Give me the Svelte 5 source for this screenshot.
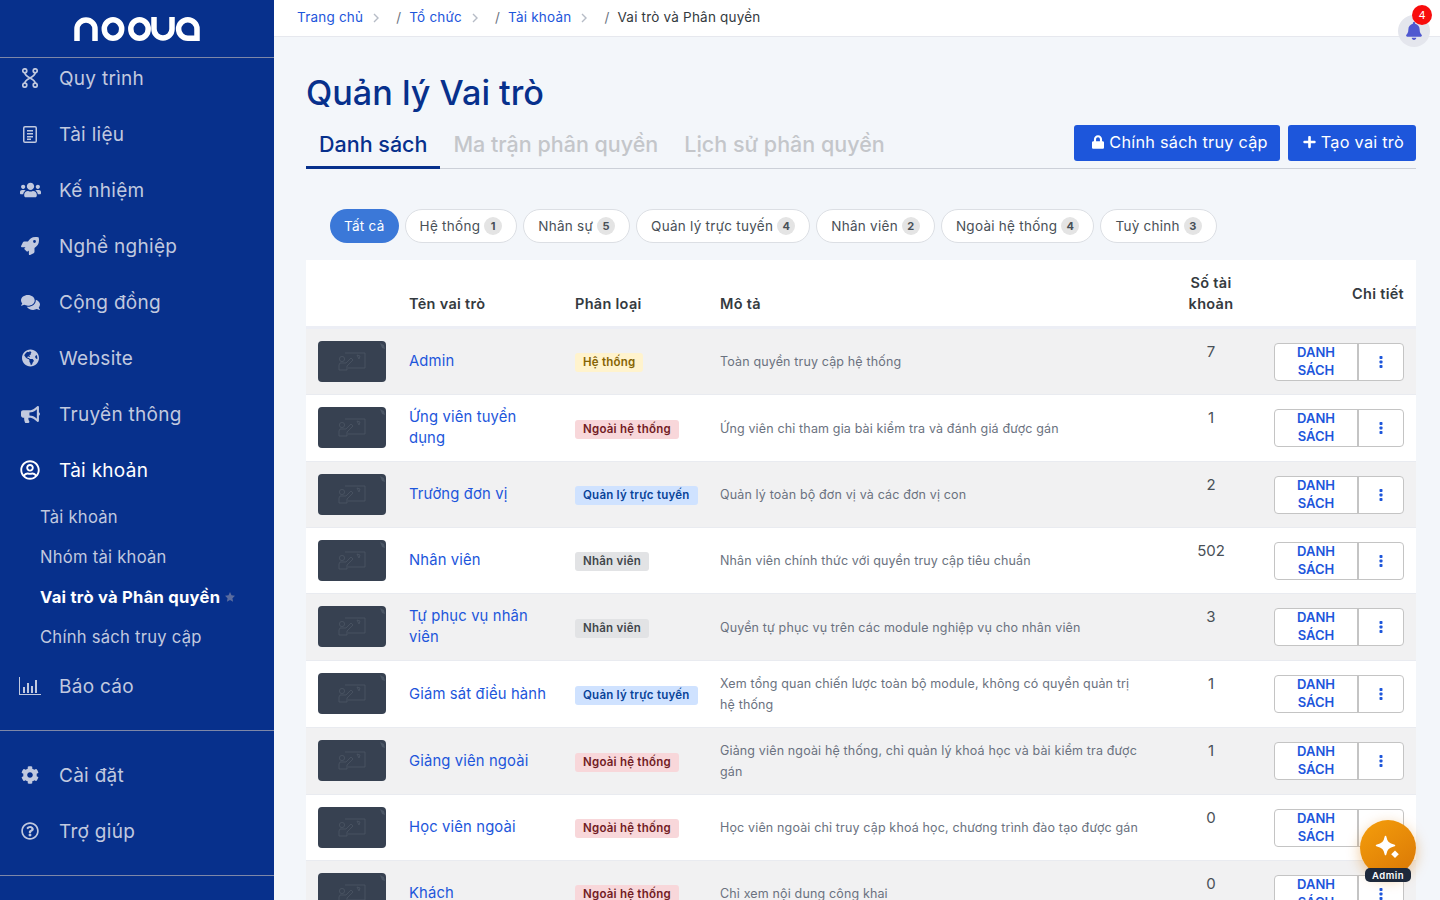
<script>
	const icons = {
		users: ['0 0 640 512', 'M96 224c35.3 0 64-28.7 64-64s-28.7-64-64-64-64 28.7-64 64 28.7 64 64 64zm448 0c35.3 0 64-28.7 64-64s-28.7-64-64-64-64 28.7-64 64 28.7 64 64 64zm32 32h-64c-17.6 0-33.5 7.1-45.1 18.6 40.3 22.1 68.9 62 75.1 109.4h66c17.7 0 32-14.3 32-32v-32c0-35.3-28.7-64-64-64zm-256 0c61.9 0 112-50.1 112-112S381.9 32 320 32 208 82.1 208 144s50.1 112 112 112zm76.8 32h-8.3c-20.8 10-43.9 16-68.5 16s-47.6-6-68.5-16h-8.3C179.6 288 128 339.6 128 403.2V432c0 26.5 21.5 48 48 48h288c26.5 0 48-21.5 48-48v-28.8c0-63.6-51.6-115.2-115.2-115.2zm-223.7-13.4C161.5 263.1 145.6 256 128 256H64c-35.3 0-64 28.7-64 64v32c0 17.7 14.3 32 32 32h65.9c6.3-47.4 34.9-87.3 75.2-109.4z'],
		rocket: ['0 0 512 512', 'M505.12 19.09c-1.19-5.53-6.66-11-12.21-12.19C460.72 0 435.51 0 410.41 0 307.18 0 245.27 55.2 199.05 128H94.84c-16.35.02-35.56 11.88-42.89 26.48L2.52 253.3A28.4 28.4 0 0 0 0 264a24 24 0 0 0 24 24h103.81l-22.47 22.47c-11.37 11.36-13 32.26 0 45.25l50.9 50.91c11.16 11.19 32.16 13.16 45.28 0l22.47-22.47V488a24 24 0 0 0 24 24 28.56 28.56 0 0 0 10.71-2.52l98.73-49.39c14.63-7.3 26.51-26.5 26.51-42.86V312.8c72.6-46.31 128.03-108.41 128.03-211.1.02-25.2.02-50.4-6.93-82.61zM384.04 168a40 40 0 1 1 40.01-40 40.02 40.02 0 0 1-40.01 40z'],
		comments: ['0 0 576 512', 'M416 192c0-88.4-93.1-160-208-160S0 103.6 0 192c0 34.3 14.1 65.9 38 92-13.4 30.2-35.5 54.2-35.8 54.5-2.2 2.3-2.8 5.7-1.5 8.7S4.8 352 8 352c36.6 0 66.9-12.3 88.7-25 32.2 15.7 70.3 25 111.3 25 114.9 0 208-71.6 208-160zm122 220c23.9-26 38-57.7 38-92 0-66.9-53.5-124.2-129.3-148.1.9 6.6 1.3 13.3 1.3 20.1 0 105.9-107.7 192-240 192-10.8 0-21.3-.8-31.7-1.9C207.8 439.6 281.8 480 368 480c41 0 79.1-9.2 111.3-25 21.8 12.7 52.1 25 88.7 25 3.2 0 6.1-1.9 7.3-4.8 1.3-2.9.7-6.3-1.5-8.7-.3-.3-22.4-24.2-35.8-54.5z'],
		globe: ['0 0 496 512', 'M248 8C111.03 8 0 119.03 0 256s111.03 248 248 248 248-111.03 248-248S384.97 8 248 8zm82.29 357.6c-3.9 3.88-7.99 7.95-11.31 11.28-2.99 3-5.1 6.7-6.17 10.71-1.51 5.66-2.73 11.38-4.77 16.87l-17.39 46.85c-13.76 3-28 4.69-42.65 4.69v-27.38c1.69-12.62-7.64-36.26-22.63-51.25-6-6-9.37-14.14-9.37-22.63v-32.01c0-11.64-6.27-22.34-16.46-27.97-14.37-7.95-34.81-19.06-48.81-26.11-11.48-5.78-22.1-13.14-31.65-21.75l-.8-.72a114.792 114.792 0 0 1-18.06-20.74c-9.38-13.77-24.66-36.42-34.59-51.14 20.47-45.5 57.36-82.04 103.2-101.89l24.01 12.01C203.48 89.74 216 82.01 216 70.11v-11.3c7.99-1.29 16.12-2.11 24.39-2.42l28.3 28.3c6.25 6.25 6.25 16.38 0 22.63L264 112l-10.34 10.34c-3.12 3.12-3.12 8.19 0 11.31l4.69 4.69c3.12 3.12 3.12 8.19 0 11.31l-8 8a8.008 8.008 0 0 1-5.66 2.34h-8.99c-2.08 0-4.08.81-5.58 2.27l-9.92 9.65a8.008 8.008 0 0 0-1.58 9.31l15.59 31.19c2.66 5.32-1.21 11.58-7.15 11.58h-5.64c-1.93 0-3.79-.7-5.24-1.96l-9.28-8.06a16.017 16.017 0 0 0-15.55-3.1l-31.17 10.39a11.95 11.95 0 0 0-8.17 11.34c0 4.53 2.56 8.66 6.61 10.69l11.08 5.54c9.41 4.71 19.79 7.16 30.31 7.16s22.59 27.29 32 32h66.75c8.49 0 16.62 3.37 22.63 9.37l13.69 13.69a30.503 30.503 0 0 1 8.93 21.57 46.536 46.536 0 0 1-13.72 32.98zM417 274.25c-5.79-1.45-10.84-5-14.15-9.97l-17.98-26.97a23.97 23.97 0 0 1 0-26.62l19.59-29.38c2.32-3.47 5.5-6.29 9.24-8.15l12.98-6.49C440.2 193.59 448 223.87 448 256c0 8.67-.74 17.16-1.82 25.54L417 274.25z'],
		bullhorn: ['0 0 576 512', 'M576 240c0-23.63-12.95-44.04-32-55.12V32.01C544 23.26 537.02 0 512 0c-7.12 0-14.19 2.38-19.98 7.02l-85.03 68.03C364.28 109.19 310.66 128 256 128H64c-35.35 0-64 28.65-64 64v96c0 35.35 28.65 64 64 64h33.7c-1.39 10.48-2.18 21.14-2.18 32 0 39.77 9.26 77.35 25.56 110.94 5.19 10.69 16.52 17.06 28.4 17.06h74.28c26.05 0 41.69-29.84 25.9-50.56-16.4-21.52-26.15-48.36-26.15-77.44 0-11.11 1.62-21.79 4.41-32H256c54.66 0 108.28 18.81 150.98 52.95l85.03 68.03a32.023 32.023 0 0 0 19.98 7.02c24.92 0 32-22.78 32-32V295.13C563.05 284.04 576 263.63 576 240zm-96 141.42l-33.05-26.44C392.95 311.78 325.12 288 256 288v-96c69.12 0 136.95-23.78 190.95-66.98L480 98.58v282.84z'],
		user: ['0 0 496 512', 'M248 104c-53 0-96 43-96 96s43 96 96 96 96-43 96-96-43-96-96-96zm0 144c-26.5 0-48-21.5-48-48s21.5-48 48-48 48 21.5 48 48-21.5 48-48 48zm0-240C111 8 0 119 0 256s111 248 248 248 248-111 248-248S385 8 248 8zm0 448c-49.7 0-95.1-18.3-130.1-48.4 14.9-23 40.4-38.6 69.6-39.5 20.8 6.4 40.6 9.6 60.5 9.6s39.7-3.1 60.5-9.6c29.2 1 54.7 16.5 69.6 39.5-35 30.1-80.4 48.4-130.1 48.4zm162.7-84.1c-24.4-31.4-62.1-51.9-105.1-51.9-10.2 0-26 9.6-57.6 9.6-31.5 0-47.4-9.6-57.6-9.6-42.9 0-80.6 20.5-105.1 51.9C61.9 339.2 48 299.2 48 256c0-110.3 89.7-200 200-200s200 89.7 200 200c0 43.2-13.9 83.2-37.3 115.9z'],
		cog: ['0 0 512 512', 'M487.4 315.7l-42.6-24.6c4.3-23.2 4.3-47 0-70.2l42.6-24.6c4.9-2.8 7.1-8.6 5.5-14-11.1-35.6-30-67.8-54.7-94.6-3.8-4.1-10-5.1-14.8-2.3L380.8 110c-17.9-15.4-38.5-27.3-60.8-35.1V25.8c0-5.6-3.9-10.5-9.4-11.7-36.7-8.2-74.3-7.8-109.2 0-5.5 1.2-9.4 6.1-9.4 11.7V75c-22.2 7.9-42.8 19.8-60.8 35.1L88.7 85.5c-4.9-2.8-11-1.9-14.8 2.3-24.7 26.7-43.6 58.9-54.7 94.6-1.7 5.4.6 11.2 5.5 14L67.3 221c-4.3 23.2-4.3 47 0 70.2l-42.6 24.6c-4.9 2.8-7.1 8.6-5.5 14 11.1 35.6 30 67.8 54.7 94.6 3.8 4.1 10 5.1 14.8 2.3l42.6-24.6c17.9 15.4 38.5 27.3 60.8 35.1v49.2c0 5.6 3.9 10.5 9.4 11.7 36.7 8.2 74.3 7.8 109.2 0 5.5-1.2 9.4-6.1 9.4-11.7v-49.2c22.2-7.9 42.8-19.8 60.8-35.1l42.6 24.6c4.9 2.8 11 1.9 14.8-2.3 24.7-26.7 43.6-58.9 54.7-94.6 1.5-5.5-.7-11.3-5.6-14.1zM256 336c-44.1 0-80-35.9-80-80s35.9-80 80-80 80 35.9 80 80-35.9 80-80 80z'],
		help: ['0 0 512 512', 'M256 8C119.043 8 8 119.083 8 256c0 136.997 111.043 248 248 248s248-111.003 248-248C504 119.083 392.957 8 256 8zm0 448c-110.532 0-200-89.431-200-200 0-110.495 89.472-200 200-200 110.491 0 200 89.471 200 200 0 110.53-89.431 200-200 200zm107.244-255.2c0 67.052-72.421 68.084-72.421 92.863V300c0 6.627-5.373 12-12 12h-45.647c-6.627 0-12-5.373-12-12v-8.659c0-35.745 27.1-50.034 47.579-61.516 17.561-9.845 28.324-16.541 28.324-29.579 0-17.246-21.999-28.693-39.784-28.693-23.189 0-33.894 10.977-48.942 29.969-4.057 5.12-11.46 6.071-16.666 2.124l-27.824-21.098c-5.107-3.872-6.251-11.066-2.644-16.363C184.846 131.491 214.94 112 261.794 112c49.071 0 101.45 38.304 101.45 88.8zM298 368c0 23.159-18.841 42-42 42s-42-18.841-42-42 18.841-42 42-42 42 18.841 42 42z'],
		doc: ['0 0 14 17', 'M2 0h10a2 2 0 0 1 2 2v13a2 2 0 0 1-2 2H2a2 2 0 0 1-2-2V2a2 2 0 0 1 2-2zm0 1.500a.5.5 0 0 0-.5.5v13a.5.5 0 0 0 .5.5h10a.5.5 0 0 0 .5-.5V2a.5.5 0 0 0-.5-.5H2zM4 4h6v1.500H4V4zm0 3h6v1.500H4V7zm0 3h6v1.500H4V10zm0 2.600h4V14H4v-1.400z'],
		bars: ['0 0 22 18', 'M0 0h1v17h21v1H0V0zm4 10h2v6H4v-6zm4-4h2v10H8V6zm4 3h2v7h-2V9zm4-6h2v13h-2V3z']
	};

	const navTop = [
		{ label: 'Quy trình', icon: 'flow', w: 16, h: 20 },
		{ label: 'Tài liệu', icon: 'doc', w: 14, h: 17 },
		{ label: 'Kế nhiệm', icon: 'users', w: 21, h: 18 },
		{ label: 'Nghề nghiệp', icon: 'rocket', w: 18, h: 18 },
		{ label: 'Cộng đồng', icon: 'comments', w: 19, h: 17 },
		{ label: 'Website', icon: 'globe', w: 17, h: 18 },
		{ label: 'Truyền thông', icon: 'bullhorn', w: 19, h: 17 }
	];

	const subNav = [
		{ label: 'Tài khoản' },
		{ label: 'Nhóm tài khoản' },
		{ label: 'Vai trò và Phân quyền', active: true },
		{ label: 'Chính sách truy cập' }
	];

	const filters = [
		{ label: 'Tất cả', active: true },
		{ label: 'Hệ thống', count: 1 },
		{ label: 'Nhân sự', count: 5 },
		{ label: 'Quản lý trực tuyến', count: 4 },
		{ label: 'Nhân viên', count: 2 },
		{ label: 'Ngoài hệ thống', count: 4 },
		{ label: 'Tuỳ chỉnh', count: 3 }
	];

	const badgeClass = {
		'Hệ thống': 'sys',
		'Ngoài hệ thống': 'ext',
		'Quản lý trực tuyến': 'mgr',
		'Nhân viên': 'emp'
	};

	const roles = [
		{ name: 'Admin', type: 'Hệ thống', desc: 'Toàn quyền truy cập hệ thống', n: 7 },
		{ name: 'Ứng viên tuyển dụng', type: 'Ngoài hệ thống', desc: 'Ứng viên chỉ tham gia bài kiểm tra và đánh giá được gán', n: 1 },
		{ name: 'Trưởng đơn vị', type: 'Quản lý trực tuyến', desc: 'Quản lý toàn bộ đơn vị và các đơn vị con', n: 2 },
		{ name: 'Nhân viên', type: 'Nhân viên', desc: 'Nhân viên chính thức với quyền truy cập tiêu chuẩn', n: 502 },
		{ name: 'Tự phục vụ nhân viên', type: 'Nhân viên', desc: 'Quyền tự phục vụ trên các module nghiệp vụ cho nhân viên', n: 3 },
		{ name: 'Giám sát điều hành', type: 'Quản lý trực tuyến', desc: 'Xem tổng quan chiến lược toàn bộ module, không có quyền quản trị hệ thống', n: 1 },
		{ name: 'Giảng viên ngoài', type: 'Ngoài hệ thống', desc: 'Giảng viên ngoài hệ thống, chỉ quản lý khoá học và bài kiểm tra được gán', n: 1 },
		{ name: 'Học viên ngoài', type: 'Ngoài hệ thống', desc: 'Học viên ngoài chỉ truy cập khoá học, chương trình đào tạo được gán', n: 0 },
		{ name: 'Khách', type: 'Ngoài hệ thống', desc: 'Chỉ xem nội dung công khai', n: 0 }
	];

	const crumbs = ['Trang chủ', 'Tổ chức', 'Tài khoản'];
</script>

{#snippet icon(name, w, h)}
	{#if name === 'flow'}
		<svg class="ico" width={w} height={h} viewBox="0 0 16 20" fill="none" stroke="currentColor" stroke-width="1.700">
			<circle cx="2.800" cy="2.800" r="2" />
			<circle cx="13.200" cy="2.800" r="2" />
			<circle cx="2.800" cy="17.200" r="2" />
			<circle cx="13.200" cy="17.200" r="2" />
			<path d="M2.800 4.800c0 5 10.400 5.400 10.400 10.400M13.200 4.800c0 5-10.400 5.400-10.400 10.400" />
		</svg>
	{:else}
		<svg class="ico" width={w} height={h} viewBox={icons[name][0]} fill="currentColor"><path d={icons[name][1]} /></svg>
	{/if}
{/snippet}

{#snippet navItem(label, name, w, h, active)}
	<a class="nav-item" class:active href="#top">
		<span class="nav-icon">{@render icon(name, w, h)}</span>
		<span>{label}</span>
	</a>
{/snippet}

<div class="shell">
	<aside class="sidebar">
		<div class="logo">
			<svg width="126" height="24" viewBox="0 0 126 24" fill="none" stroke="#fff" stroke-width="5.500">
				<path d="M3 24V12a9 9 0 0 1 18 0v12" />
				<ellipse cx="39" cy="12" rx="8.700" ry="9.200" />
				<ellipse cx="65.500" cy="12" rx="8.700" ry="9.200" />
				<path d="M80 0v12a9 9 0 0 0 18 0V0" />
				<path d="M123 24V12a9.200 9.200 0 1 0-9.200 9.200H123" />
			</svg>
		</div>

		<nav class="nav">
			{#each navTop as item}
				{@render navItem(item.label, item.icon, item.w, item.h, false)}
			{/each}
			{@render navItem('Tài khoản', 'user', 20, 20, true)}
			<div class="sub-nav">
				{#each subNav as sub}
					<a class="sub-item" class:active={sub.active} href="#top">
						{sub.label}
						{#if sub.active}
							<svg class="star" width="10" height="10" viewBox="0 0 20 20" fill="currentColor"><path d="M10 0l3 6.500 7 .9-5.100 4.900 1.300 7.100-6.200-3.500-6.200 3.500 1.300-7.100L0 7.400l7-.9z" /></svg>
						{/if}
					</a>
				{/each}
			</div>
			<a class="nav-item" href="#top">
				<span class="nav-icon">{@render icon('bars', 22, 18)}</span>
				<span>Báo cáo</span>
			</a>
		</nav>

		<nav class="nav nav-bottom">
			{@render navItem('Cài đặt', 'cog', 18, 18, false)}
			{@render navItem('Trợ giúp', 'help', 18, 18, false)}
		</nav>
	</aside>

	<main class="main">
		<header class="topbar">
			{#each crumbs as crumb}
				<a class="crumb" href="#top">{crumb}</a>
				<svg class="chev" width="6" height="10" viewBox="0 0 6 10" fill="none" stroke="#b6bcc6" stroke-width="1.400"><path d="M1 1l4 4-4 4" /></svg>
				<span class="slash">/</span>
			{/each}
			<span class="crumb-current">Vai trò và Phân quyền</span>
		</header>

		<div class="content">
			<h1>Quản lý Vai trò</h1>

			<div class="tabs-row">
				<div class="tabs">
					<span class="tab active">Danh sách</span>
					<span class="tab">Ma trận phân quyền</span>
					<span class="tab">Lịch sử phân quyền</span>
				</div>
				<div class="actions">
					<button class="btn">
						<svg width="12" height="14" viewBox="0 0 448 512" fill="currentColor"><path d="M400 224h-24v-72C376 68.200 307.800 0 224 0S72 68.200 72 152v72H48c-26.500 0-48 21.500-48 48v192c0 26.500 21.500 48 48 48h352c26.500 0 48-21.500 48-48V272c0-26.500-21.500-48-48-48zm-104 0H152v-72c0-39.700 32.300-72 72-72s72 32.300 72 72v72z" /></svg>
						Chính sách truy cập
					</button>
					<button class="btn btn-create">
						<svg width="13" height="14" viewBox="0 0 448 512" fill="currentColor"><path d="M416 208H272V64c0-17.670-14.330-32-32-32h-32c-17.670 0-32 14.330-32 32v144H32c-17.670 0-32 14.330-32 32v32c0 17.670 14.330 32 32 32h144v144c0 17.670 14.330 32 32 32h32c17.670 0 32-14.330 32-32V304h144c17.670 0 32-14.330 32-32v-32c0-17.670-14.330-32-32-32z" /></svg>
						Tạo vai trò
					</button>
				</div>
			</div>

			<div class="filters">
				{#each filters as f}
					<span class="pill" class:active={f.active}>
						{f.label}
						{#if f.count}<span class="count">{f.count}</span>{/if}
					</span>
				{/each}
			</div>

			<table>
				<colgroup>
					<col style="width: 91px" />
					<col style="width: 166px" />
					<col style="width: 145px" />
					<col style="width: 452px" />
					<col style="width: 102px" />
					<col />
				</colgroup>
				<thead>
					<tr>
						<th></th>
						<th>Tên vai trò</th>
						<th>Phân loại</th>
						<th>Mô tả</th>
						<th class="center">Số tài khoản</th>
						<th class="right">Chi tiết</th>
					</tr>
				</thead>
				<tbody>
					{#each roles as role}
						<tr>
							<td class="thumb-cell">
								<div class="thumb">
									<svg width="28" height="19" viewBox="0 0 28 19" fill="none" stroke="#4b5665" stroke-width="0.800">
										<path d="M7 1h20v15H10" />
										<circle cx="4" cy="7" r="2.600" />
										<path d="M1 18v-5l1-2h6l5-5 2 2-6 6v4z" />
										<path d="M19 3l2 4 1-3z" />
									</svg>
									<svg class="thumb-corner" width="5" height="6" viewBox="0 0 5 6" fill="#4b5665"><path d="M0 0l4 2 1 4-3-1z" /></svg>
								</div>
							</td>
							<td class="name"><a href="#top">{role.name}</a></td>
							<td><span class="badge {badgeClass[role.type]}">{role.type}</span></td>
							<td class="desc">{role.desc}</td>
							<td class="num">{role.n}</td>
							<td>
								<div class="split">
									<a class="split-main" href="#top">Danh sách</a>
									<span class="split-more">
										<svg width="4" height="12" viewBox="0 0 4 12" fill="#1d56db"><rect x="0.500" y="0" width="3" height="3" rx="0.800" /><rect x="0.500" y="4.500" width="3" height="3" rx="0.800" /><rect x="0.500" y="9" width="3" height="3" rx="0.800" /></svg>
									</span>
								</div>
							</td>
						</tr>
					{/each}
				</tbody>
			</table>
		</div>
	</main>

	<div class="notify">
		<svg width="16" height="18" viewBox="0 0 448 512" fill="#4f58d0"><path d="M224 512c35.320 0 63.970-28.650 63.970-64H160.030c0 35.350 28.650 64 63.970 64zm215.390-149.710c-19.320-20.760-55.470-51.990-55.470-154.290 0-77.700-54.480-139.900-127.940-155.160V32c0-17.670-14.320-32-31.980-32s-31.980 14.330-31.980 32v20.840C118.560 68.100 64.080 130.300 64.080 208c0 102.300-36.150 133.530-55.470 154.290-6 6.450-8.660 14.160-8.610 21.710.11 16.400 12.980 32 32.100 32h383.800c19.120 0 32-15.600 32.100-32 .05-7.550-2.610-15.270-8.610-21.710z" /></svg>
		<span class="notify-badge">4</span>
	</div>

	<div class="assistant">
		<svg width="30" height="30" viewBox="0 0 30 30" fill="#fff"><path d="M12.500 3.500C13.500 9 15.500 11 21.500 12.500 15.500 14 13.500 16 12.500 21.500 11.500 16 9.500 14 3.500 12.500 9.500 11 11.500 9 12.500 3.500z" stroke="#fff" stroke-width="1.500" stroke-linejoin="round" /><path d="M22 17.500l3.800 3.800-3.800 3.800-3.800-3.800z" /></svg>
		<span class="assistant-label">Admin</span>
	</div>
</div>

<style>
	:global(body) {
		margin: 0;
		font-family: Inter, 'Noto Sans', sans-serif;
		background: #f3f6fa;
	}

	a {
		text-decoration: none;
		color: inherit;
	}

	.shell {
		display: flex;
		height: 900px;
		overflow: hidden;
		position: relative;
	}

	.sidebar {
		width: 274px;
		flex-shrink: 0;
		background: #07308c;
		color: #c1c9df;
	}

	.logo {
		height: 58px;
		box-sizing: border-box;
		padding-top: 17px;
		display: flex;
		justify-content: center;
		border-bottom: 1px solid #7d87a8;
	}

	.nav {
		display: flex;
		flex-direction: column;
		padding-bottom: 24px;
		border-bottom: 1px solid #7d87a8;
	}

	.nav-bottom {
		padding-top: 24px;
	}

	.nav-item {
		height: 40px;
		display: flex;
		align-items: center;
		margin-bottom: 16px;
		font-size: 19px;
		letter-spacing: 0.015em;
	}

	.nav-item:last-child {
		margin-bottom: 0;
	}

	.nav-item.active {
		color: #fff;
		margin-bottom: 7px;
	}

	.nav-icon {
		width: 20px;
		margin: 0 19px 0 20px;
		display: flex;
		justify-content: center;
		flex-shrink: 0;
	}

	.ico {
		flex-shrink: 0;
	}

	.sub-nav {
		display: flex;
		flex-direction: column;
		margin-bottom: 9px;
	}

	.sub-item {
		height: 40px;
		display: flex;
		align-items: center;
		padding-left: 40px;
		font-size: 16.600px;
		letter-spacing: 0.015em;
	}

	.sub-item.active {
		color: #fff;
		font-weight: 700;
	}

	.star {
		color: #5a6c9f;
		margin-left: 5px;
	}

	.main {
		flex: 1;
		min-width: 0;
	}

	.topbar {
		height: 36px;
		background: #fff;
		border-bottom: 1px solid #e6e8ee;
		display: flex;
		align-items: center;
		padding-left: 23px;
		font-size: 13.500px;
		letter-spacing: 0.015em;
	}

	.crumb {
		color: #1d56db;
		position: relative;
		top: -1px;
	}

	.chev {
		margin: 0 17px 0 10px;
	}

	.slash {
		color: #6b7280;
		margin-right: 8px;
		position: relative;
		top: -1px;
	}

	.crumb-current {
		color: #343a40;
		position: relative;
		top: -1px;
	}

	.content {
		padding: 35px 24px 0 32px;
	}

	h1 {
		margin: 0 0 12px;
		font-size: 34.200px;
		line-height: 41px;
		font-weight: 450;
		color: #07308c;
	}

	.tabs-row {
		display: flex;
		justify-content: space-between;
		height: 43px;
		border-bottom: 1px solid #ccd0d8;
	}

	.tabs {
		display: flex;
	}

	.tab {
		padding: 6px 13px 0;
		font-size: 21.500px;
		line-height: 26px;
		font-weight: 500;
		color: #c4c6ca;
		height: 43px;
		box-sizing: border-box;
	}

	.tab.active {
		color: #07308c;
		border-bottom: 3px solid #07308c;
		height: 44px;
	}

	.actions {
		display: flex;
		gap: 8px;
	}

	.btn {
		height: 36px;
		display: flex;
		align-items: center;
		justify-content: center;
		gap: 5px;
		border: 0;
		border-radius: 3px;
		background: #1d56db;
		color: #fff;
		font-family: inherit;
		font-size: 16.300px;
		padding: 0 12px 2px 18px;
		letter-spacing: 0.015em;
	}

	.btn-create {
		padding-left: 15px;
	}

	.filters {
		display: flex;
		gap: 6px;
		margin: 40px 0 17px;
		padding-left: 24px;
	}

	.pill {
		height: 34px;
		box-sizing: border-box;
		display: flex;
		align-items: center;
		gap: 4px;
		padding: 0 14px;
		border: 1px solid #dcdfe4;
		border-radius: 17px;
		background: #fff;
		color: #495057;
		font-size: 13.500px;
		letter-spacing: 0.02em;
	}

	.pill.active {
		background: #3b78d8;
		border: 0;
		color: #fff;
	}

	.count {
		width: 18px;
		height: 18px;
		border-radius: 50%;
		background: #e4e4e4;
		font-size: 11px;
		font-weight: 700;
		display: flex;
		align-items: center;
		justify-content: center;
	}

	table {
		width: 1110px;
		table-layout: fixed;
		border-collapse: separate;
		border-spacing: 0;
		background: #fff;
	}

	th {
		padding: 12px;
		font-size: 14.500px;
		line-height: 21px;
		font-weight: 600;
		letter-spacing: 0.02em;
		color: #343a40;
		text-align: left;
		vertical-align: bottom;
		border-bottom: 3px solid #eceef5;
	}

	th.center {
		text-align: center;
	}

	th.right {
		text-align: right;
		vertical-align: middle;
	}

	td {
		padding: 12px;
		line-height: 21px;
		vertical-align: middle;
		border-bottom: 1px solid #e9ebf0;
	}

	td.thumb-cell {
		vertical-align: top;
	}

	tbody tr:nth-child(odd) {
		background: #f1f1f2;
	}

	.thumb {
		position: relative;
		width: 68px;
		height: 41px;
		border-radius: 4px;
		background: #374151;
		display: flex;
		align-items: center;
		justify-content: center;
	}

	.thumb-corner {
		position: absolute;
		right: 1px;
		top: 2px;
	}

	.name {
		font-size: 14.800px;
		letter-spacing: 0.01em;
		color: #1d56db;
	}

	.badge {
		display: inline-block;
		padding: 0 8px;
		border-radius: 3px;
		font-size: 11.500px;
		line-height: 19px;
		font-weight: 600;
		letter-spacing: 0.02em;
		white-space: nowrap;
		vertical-align: 1px;
	}

	.sys {
		background: #fff3cd;
		color: #856404;
	}

	.ext {
		background: #f8d7da;
		color: #721c24;
	}

	.mgr {
		background: #cfe2ff;
		color: #084298;
	}

	.emp {
		background: #e2e3e5;
		color: #41464b;
	}

	.desc {
		padding-right: 20px;
		font-size: 12.500px;
		letter-spacing: 0.012em;
		color: #6b7280;
	}

	.num {
		vertical-align: top;
		text-align: center;
		font-size: 15px;
		color: #495057;
	}

	.split {
		width: 130px;
		height: 38px;
		margin-left: auto;
		box-sizing: border-box;
		display: flex;
		background: #fff;
		border: 1px solid #c4c4c4;
		border-radius: 4px;
	}

	.split-main {
		width: 84px;
		flex-shrink: 0;
		box-sizing: border-box;
		display: flex;
		align-items: center;
		justify-content: center;
		padding: 0 16px 2px;
		border-right: 2px solid #c4c4c4;
		font-size: 13px;
		line-height: 18px;
		font-weight: 600;
		text-align: center;
		text-transform: uppercase;
		color: #1d56db;
	}

	.split-more {
		flex: 1;
		display: flex;
		align-items: center;
		justify-content: center;
	}

	.notify {
		position: absolute;
		left: 1398px;
		top: 15px;
		width: 32px;
		height: 32px;
		border-radius: 50%;
		background: #e4e6ed;
		display: flex;
		align-items: center;
		justify-content: center;
	}

	.notify-badge {
		position: absolute;
		left: 14px;
		top: -10px;
		width: 20px;
		height: 20px;
		border-radius: 50%;
		background: #f80d0d;
		color: #fff;
		font-size: 11px;
		display: flex;
		align-items: center;
		justify-content: center;
	}

	.assistant {
		position: absolute;
		left: 1360px;
		top: 820px;
		width: 56px;
		height: 56px;
		border-radius: 50%;
		background: linear-gradient(145deg, #f59e0b, #d97706);
		box-shadow: 0 4px 14px rgba(217, 119, 6, 0.4);
		display: flex;
		align-items: center;
		justify-content: center;
	}

	.assistant-label {
		position: absolute;
		left: 5px;
		top: 48px;
		width: 46px;
		height: 14px;
		border-radius: 5px;
		background: #1e293b;
		color: #fff;
		font-size: 9.500px;
		font-weight: 600;
		letter-spacing: 0.05em;
		display: flex;
		align-items: center;
		justify-content: center;
	}
</style>
